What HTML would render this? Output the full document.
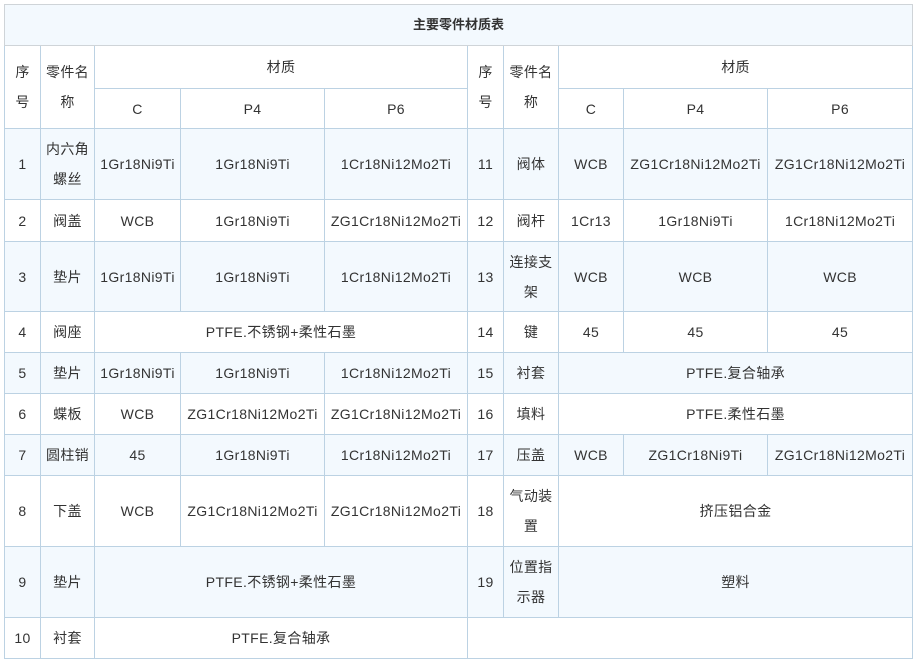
<!DOCTYPE html>
<html><head><meta charset="utf-8"><style>
body{margin:0;background:#fff;}
table{position:absolute;left:4px;top:4px;border-collapse:collapse;table-layout:fixed;width:908px;font-family:"Liberation Sans","Noto Sans CJK SC",sans-serif;font-size:14px;color:#333;}
td{border:1px solid #bcd2e3;text-align:center;vertical-align:middle;padding:0 1px;line-height:30px;overflow:hidden;white-space:nowrap;letter-spacing:0.35px;}
tr.s td{background:#f3f9fe;}
td.t{background:#f3f9fe;font-weight:bold;font-size:13px;border-color:#cfd4d8;letter-spacing:0;}
.w{white-space:normal;}
</style></head><body>
<table>
<colgroup><col style="width:36px"><col style="width:54px"><col style="width:86px"><col style="width:144px"><col style="width:143px"><col style="width:36px"><col style="width:55px"><col style="width:65px"><col style="width:144px"><col style="width:145px"></colgroup>
<tr style="height:41px"><td class="t" colspan="10">主要零件材质表</td></tr>
<tr style="height:43px"><td rowspan="2" class="w">序<br>号</td><td rowspan="2">零件名<br>称</td><td colspan="3">材质</td><td rowspan="2">序<br>号</td><td rowspan="2">零件名<br>称</td><td colspan="3">材质</td></tr>
<tr style="height:40px"><td>C</td><td>P4</td><td>P6</td><td>C</td><td>P4</td><td>P6</td></tr>
<tr class="s" style="height:71px"><td>1</td><td>内六角<br>螺丝</td><td>1Gr18Ni9Ti</td><td>1Gr18Ni9Ti</td><td>1Cr18Ni12Mo2Ti</td><td>11</td><td>阀体</td><td>WCB</td><td>ZG1Cr18Ni12Mo2Ti</td><td>ZG1Cr18Ni12Mo2Ti</td></tr>
<tr style="height:42px"><td>2</td><td>阀盖</td><td>WCB</td><td>1Gr18Ni9Ti</td><td>ZG1Cr18Ni12Mo2Ti</td><td>12</td><td>阀杆</td><td>1Cr13</td><td>1Gr18Ni9Ti</td><td>1Cr18Ni12Mo2Ti</td></tr>
<tr class="s" style="height:70px"><td>3</td><td>垫片</td><td>1Gr18Ni9Ti</td><td>1Gr18Ni9Ti</td><td>1Cr18Ni12Mo2Ti</td><td>13</td><td>连接支<br>架</td><td>WCB</td><td>WCB</td><td>WCB</td></tr>
<tr style="height:41px"><td>4</td><td>阀座</td><td colspan="3">PTFE.不锈钢+柔性石墨</td><td>14</td><td>键</td><td>45</td><td>45</td><td>45</td></tr>
<tr class="s" style="height:41px"><td>5</td><td>垫片</td><td>1Gr18Ni9Ti</td><td>1Gr18Ni9Ti</td><td>1Cr18Ni12Mo2Ti</td><td>15</td><td>衬套</td><td colspan="3">PTFE.复合轴承</td></tr>
<tr style="height:41px"><td>6</td><td>蝶板</td><td>WCB</td><td>ZG1Cr18Ni12Mo2Ti</td><td>ZG1Cr18Ni12Mo2Ti</td><td>16</td><td>填料</td><td colspan="3">PTFE.柔性石墨</td></tr>
<tr class="s" style="height:41px"><td>7</td><td>圆柱销</td><td>45</td><td>1Gr18Ni9Ti</td><td>1Cr18Ni12Mo2Ti</td><td>17</td><td>压盖</td><td>WCB</td><td>ZG1Cr18Ni9Ti</td><td>ZG1Cr18Ni12Mo2Ti</td></tr>
<tr style="height:71px"><td>8</td><td>下盖</td><td>WCB</td><td>ZG1Cr18Ni12Mo2Ti</td><td>ZG1Cr18Ni12Mo2Ti</td><td>18</td><td>气动装<br>置</td><td colspan="3">挤压铝合金</td></tr>
<tr class="s" style="height:71px"><td>9</td><td>垫片</td><td colspan="3">PTFE.不锈钢+柔性石墨</td><td>19</td><td>位置指<br>示器</td><td colspan="3">塑料</td></tr>
<tr style="height:41px"><td>10</td><td>衬套</td><td colspan="3">PTFE.复合轴承</td><td colspan="5"></td></tr>
</table>
</body></html>
